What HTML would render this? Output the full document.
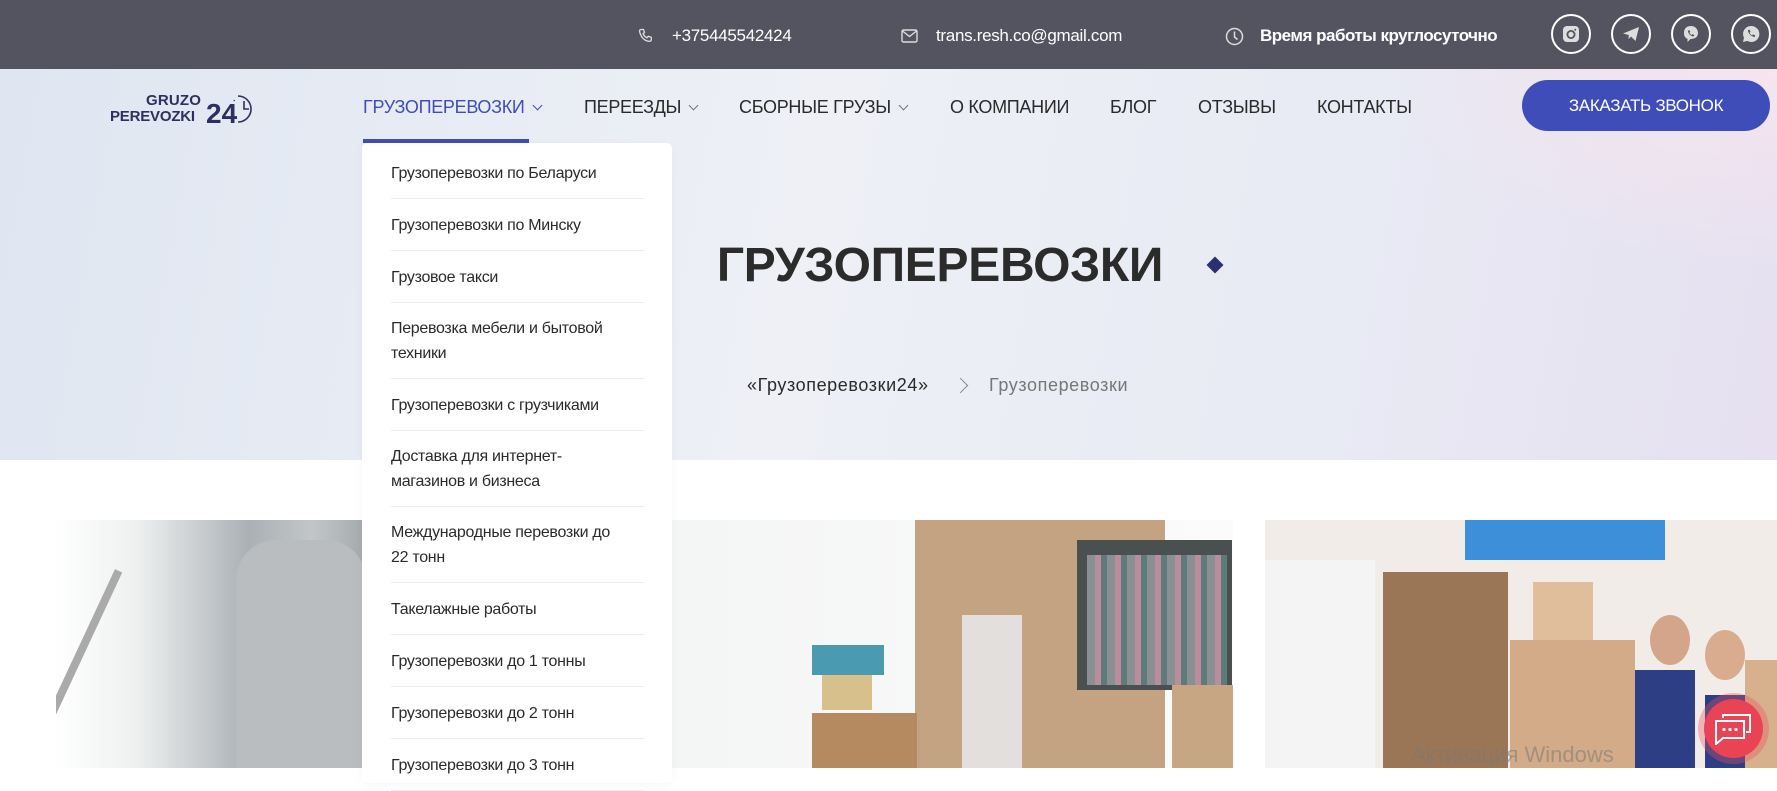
<!DOCTYPE html>
<html><head><meta charset="utf-8">
<style>
*{margin:0;padding:0;box-sizing:border-box}
body{width:1777px;height:768px;overflow:hidden;background:#fff;font-family:"Liberation Sans",sans-serif;position:relative}
.top{position:absolute;left:0;top:0;width:1777px;height:69px;background:#545461;color:#fff}
.top span{position:absolute;top:26px;font-size:17px;letter-spacing:-0.3px}
.soc{position:absolute;top:14px;width:40px;height:40px;border:2px solid #fff;border-radius:50%}
.soc svg{position:absolute;left:9px;top:9px}
.hero{position:absolute;left:0;top:69px;width:1777px;height:391px;background:linear-gradient(100deg,#dfe6f1 0%,#eef0f6 45%,#e8eaf4 75%,#e6e0f0 100%)}
.hero:after{content:"";position:absolute;right:0;top:0;width:400px;height:200px;background:radial-gradient(ellipse at 100% 0%,rgba(246,228,238,1),rgba(246,228,238,0) 70%)}
.nav{position:absolute;top:97px;font-size:18px;color:#2a2a2a;letter-spacing:-0.3px}
.chev{display:inline-block;width:7px;height:7px;border-right:1.6px solid #777;border-bottom:1.6px solid #777;transform:rotate(45deg);margin-left:9px;position:relative;top:-4px}
.btn{position:absolute;left:1522px;top:80px;width:248px;height:51px;border-radius:26px;background:#3f4db8;color:#fff;font-size:17px;text-align:center;line-height:51px;letter-spacing:-0.3px}
.dd{position:absolute;left:362px;top:143px;width:310px;height:640px;background:#fff;border-radius:5px;box-shadow:0 2px 10px rgba(0,0,0,.04);padding-top:4px}
.dd div{margin:0 28px 0 29px;border-bottom:1px solid #ececf0;font-size:16px;color:#2a2a2a;line-height:25px;letter-spacing:-0.3px}
.s{padding:14px 0 12px}
.d{padding:13px 0 12px}
.img{position:absolute;top:520px;height:248px;overflow:hidden}
</style></head><body>
<div class="top">
 <svg style="position:absolute;left:638px;top:28px" width="16" height="16" viewBox="0 0 16 16"><path d="M3 1.5l2.5 0 1 3-1.5 1.2c.8 1.8 2.3 3.3 4.1 4.1l1.2-1.5 3 1v2.5c0 .8-.7 1.5-1.5 1.5C6.6 13.3 2.7 9.4 1.5 3 1.5 2.2 2.2 1.5 3 1.5z" fill="none" stroke="#ddd" stroke-width="1.3"/></svg>
 <span style="left:672px">+375445542424</span>
 <svg style="position:absolute;left:901px;top:29px" width="17" height="14" viewBox="0 0 17 14"><rect x="1" y="1" width="15" height="12" rx="1.5" fill="none" stroke="#ddd" stroke-width="1.4"/><path d="M1.5 2l7 5.5 7-5.5" fill="none" stroke="#ddd" stroke-width="1.4"/></svg>
 <span style="left:936px">trans.resh.co@gmail.com</span>
 <svg style="position:absolute;left:1225px;top:27px" width="19" height="19" viewBox="0 0 19 19"><circle cx="9.5" cy="9.5" r="8" fill="none" stroke="#ddd" stroke-width="1.5"/><path d="M9.5 4.5v5.5l3 2.5" fill="none" stroke="#ddd" stroke-width="1.5"/></svg>
 <span style="left:1260px;font-weight:bold;letter-spacing:-0.5px">Время работы круглосуточно</span>
 <div class="soc" style="left:1551px"><svg width="18" height="18" viewBox="0 0 18 18"><rect x="1" y="1" width="16" height="16" rx="4" fill="#ddd"/><circle cx="9" cy="9.5" r="3.6" fill="none" stroke="#545461" stroke-width="1.8"/><circle cx="13.2" cy="4.8" r="1" fill="#545461"/></svg></div>
 <div class="soc" style="left:1611px"><svg width="18" height="18" viewBox="0 0 18 18"><path d="M1 8.5L17 2 13.5 16 9 11.5 6.5 14 6.8 10z" fill="#ddd"/></svg></div>
 <div class="soc" style="left:1671px"><svg width="18" height="18" viewBox="0 0 18 18"><path d="M9 1C4.5 1 2 3.5 2 8c0 3 1.2 5 3.5 5.8V17l3-3C13.5 14 16 11.5 16 8S13.5 1 9 1z" fill="#ddd"/><path d="M6 5.5l1.5-.3.8 1.8-.9.8c.5 1 1.3 1.8 2.2 2.2l.8-.9 1.8.8-.3 1.5c-3 .2-6-2.8-5.9-5.9z" fill="#545461"/></svg></div>
 <div class="soc" style="left:1731px"><svg width="18" height="18" viewBox="0 0 18 18"><path d="M9 1a8 8 0 00-7 11.8L1 17l4.3-1.1A8 8 0 109 1z" fill="#ddd"/><path d="M6 5l1.6-.2.9 2-1 .9c.6 1.2 1.5 2.1 2.7 2.7l.9-1 2 .9-.2 1.6C9.4 12 5.9 8.5 6 5z" fill="#545461"/></svg></div>
</div>
<div class="hero"></div>
<!-- logo -->
<div style="position:absolute;left:146px;top:92px;font-size:15px;font-weight:bold;color:#2c3060;letter-spacing:0.2px">GRUZO</div>
<div style="position:absolute;left:110px;top:108px;font-size:15px;font-weight:bold;color:#2c3060;letter-spacing:-0.2px">PEREVOZKI</div>
<div style="position:absolute;left:206px;top:98px;font-size:28px;font-weight:bold;color:#2c3060">24</div>
<svg style="position:absolute;left:232px;top:92px" width="26" height="33" viewBox="0 0 26 33"><path d="M6 4A12.5 12.5 0 1 1 6 30" fill="none" stroke="#2c3060" stroke-width="1.6"/><path d="M2 9 l1-2 M1 14h1" stroke="#2c3060" stroke-width="1.4" stroke-dasharray="1 2"/><path d="M12 9v8h5" fill="none" stroke="#2c3060" stroke-width="1.6"/></svg>
<!-- nav -->
<div class="nav" style="left:363px;color:#3f4db8">ГРУЗОПЕРЕВОЗКИ<i class="chev" style="border-color:#3f4db8"></i></div>
<div style="position:absolute;left:363px;top:139px;width:166px;height:4px;background:#3f4db8"></div>
<div class="nav" style="left:584px">ПЕРЕЕЗДЫ<i class="chev"></i></div>
<div class="nav" style="left:739px">СБОРНЫЕ ГРУЗЫ<i class="chev"></i></div>
<div class="nav" style="left:950px">О КОМПАНИИ</div>
<div class="nav" style="left:1110px">БЛОГ</div>
<div class="nav" style="left:1198px">ОТЗЫВЫ</div>
<div class="nav" style="left:1317px">КОНТАКТЫ</div>
<div class="btn">ЗАКАЗАТЬ ЗВОНОК</div>
<!-- title -->
<div style="position:absolute;left:670px;top:238px;width:540px;text-align:center;font-size:48px;font-weight:bold;color:#2b2b2b;letter-spacing:-0.3px">ГРУЗОПЕРЕВОЗКИ</div>
<div style="position:absolute;left:1209px;top:259px;width:12px;height:12px;background:#2c3070;transform:rotate(45deg)"></div>
<div style="position:absolute;left:747px;top:375px;font-size:18px;color:#2a2a2a;letter-spacing:0.6px">«Грузоперевозки24»</div>
<div style="position:absolute;left:955px;top:380px;width:11px;height:11px;border-right:1.5px solid #888;border-top:1.5px solid #888;transform:rotate(45deg)"></div>
<div style="position:absolute;left:989px;top:375px;font-size:18px;color:#777;letter-spacing:0.6px">Грузоперевозки</div>
<!-- images -->
<div class="img" style="left:56px;width:320px;background:linear-gradient(90deg,#fff 0%,#eef0f0 25%,#c9cdd0 45%,#aab0b4 60%,#c2c6c8 80%,#9ea4a6 100%)">
 <div style="position:absolute;left:180px;top:20px;width:130px;height:240px;border-radius:40px 40px 0 0;background:#b9bdbf"></div>
 <div style="position:absolute;left:10px;top:40px;width:8px;height:230px;background:#aaa;transform:rotate(25deg)"></div>
</div>
<div class="img" style="left:672px;width:561px;background:linear-gradient(90deg,#f4f5f5,#fbfbfb)">
 <div style="position:absolute;left:243px;top:0;width:250px;height:248px;background:#c4a382"></div>
 <div style="position:absolute;left:405px;top:20px;width:155px;height:150px;background:#4a5050"></div>
 <div style="position:absolute;left:415px;top:35px;width:140px;height:130px;background:repeating-linear-gradient(90deg,#8a8f94 0 8px,#b98d9c 8px 14px,#5d7b7a 14px 20px)"></div>
 <div style="position:absolute;left:500px;top:165px;width:61px;height:83px;background:#c7a684"></div>
 <div style="position:absolute;left:290px;top:95px;width:60px;height:153px;background:#e6e6e6;opacity:.9"></div>
 <div style="position:absolute;left:140px;top:125px;width:72px;height:30px;background:#4a9ab0"></div>
 <div style="position:absolute;left:150px;top:155px;width:50px;height:35px;background:#d7c08c"></div>
 <div style="position:absolute;left:140px;top:193px;width:105px;height:55px;background:#b68a60"></div>
</div>
<div class="img" style="left:1265px;width:512px;background:#f1ece8">
 <div style="position:absolute;left:200px;top:0;width:200px;height:40px;background:#3d8fd9"></div>
 <div style="position:absolute;left:0;top:40px;width:110px;height:208px;background:#f4f4f4"></div>
 <div style="position:absolute;left:118px;top:52px;width:125px;height:196px;background:#9b7656"></div>
 <div style="position:absolute;left:245px;top:120px;width:125px;height:128px;background:#d3ab88"></div>
 <div style="position:absolute;left:268px;top:62px;width:60px;height:58px;background:#e0bd9b"></div>
 <div style="position:absolute;left:370px;top:150px;width:60px;height:98px;background:#2d3e85"></div>
 <div style="position:absolute;left:440px;top:175px;width:72px;height:73px;background:#2d3e85"></div>
 <div style="position:absolute;left:385px;top:95px;width:40px;height:50px;border-radius:50%;background:#d4a58a"></div>
 <div style="position:absolute;left:440px;top:110px;width:40px;height:50px;border-radius:50%;background:#d9ab8f"></div>
 <div style="position:absolute;left:480px;top:140px;width:32px;height:108px;background:#d7b08d"></div>
</div>
<div style="position:absolute;left:1411px;top:742px;font-size:22px;color:rgba(120,120,120,.55)">Активация Windows</div>
<div style="position:absolute;left:1698px;top:693px;width:71px;height:71px;border-radius:50%;background:rgba(235,80,95,.35)"></div>
<div style="position:absolute;left:1704px;top:699px;width:59px;height:59px;border-radius:50%;background:#e94455"></div>
<svg style="position:absolute;left:1713px;top:713px" width="40" height="32" viewBox="0 0 40 32"><path d="M10 5V2h27v17h-4" fill="none" stroke="#fff" stroke-width="2"/><path d="M3 8h28v17H10l-7 6z" fill="none" stroke="#fff" stroke-width="2"/><circle cx="11" cy="16.5" r="1.6" fill="#fff"/><circle cx="17" cy="16.5" r="1.6" fill="#fff"/><circle cx="23" cy="16.5" r="1.6" fill="#fff"/></svg>
<!-- dropdown -->
<div class="dd">
 <div class="s">Грузоперевозки по Беларуси</div>
 <div class="s">Грузоперевозки по Минску</div>
 <div class="s">Грузовое такси</div>
 <div class="d">Перевозка мебели и бытовой<br>техники</div>
 <div class="s">Грузоперевозки с грузчиками</div>
 <div class="d">Доставка для интернет-<br>магазинов и бизнеса</div>
 <div class="d">Международные перевозки до<br>22 тонн</div>
 <div class="s">Такелажные работы</div>
 <div class="s">Грузоперевозки до 1 тонны</div>
 <div class="s">Грузоперевозки до 2 тонн</div>
 <div class="s">Грузоперевозки до 3 тонн</div>
</div>
</body></html>
